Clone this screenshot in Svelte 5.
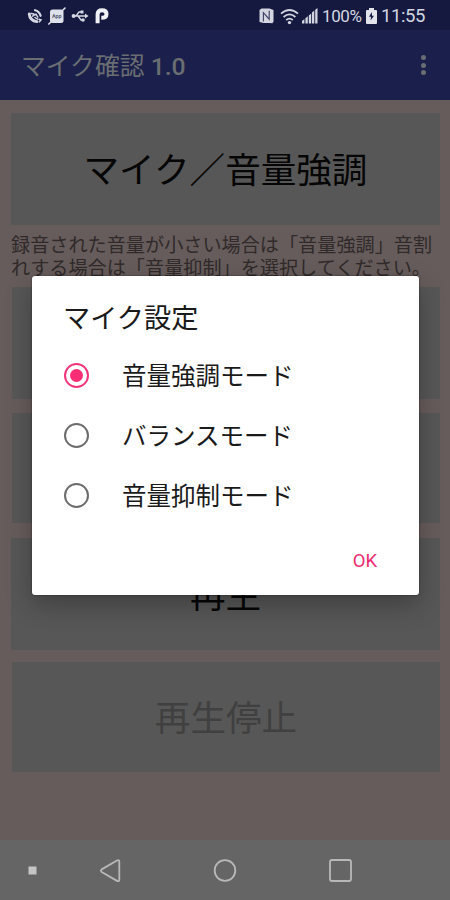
<script lang="ts">
  let selected = $state(0);
  let open = $state(true);

  const modes = ['音量強調モード', 'バランスモード', '音量抑制モード'];
</script>

<div class="screen">
  <header class="statusbar">
    <div class="group left">
      <svg class="call" width="16" height="17" viewBox="0 0 16 17">
        <path d="M2.2 6C2.6 10 5.5 13 10 13.6" fill="none" stroke="#d5d7e3" stroke-width="2.8" stroke-linecap="round" />
        <path d="M8 2.2q4.4 1 5.6 5.6" fill="none" stroke="#d5d7e3" stroke-width="2.2" stroke-linecap="round" />
        <path d="M4 5.5l3 .5M5.5 8.2l3.5-2 1.8 3M8 9.5l2.5 1.7M12 11.2l2 .6-1.6 2" fill="none" stroke="#d5d7e3" stroke-width="1.5" stroke-linecap="round" />
      </svg>
      <svg class="app" width="18" height="18" viewBox="0 0 18 18">
        <rect x="2" y="2.5" width="13.5" height="13.5" rx="2.5" fill="#dfe1ea" />
        <path d="M14.5 3.5L17 1M3 15l-2.2 2" stroke="#dfe1ea" stroke-width="1.6" stroke-linecap="round" />
        <text x="8.8" y="11" text-anchor="middle" font-size="5.5" font-weight="700" fill="#5b5e78">App</text>
      </svg>
      <svg class="usb" width="18" height="14" viewBox="0 0 18 14">
        <path d="M2 7h13M5 7l3-4h2.5M7 7l3 4h2.5" fill="none" stroke="#d5d7e3" stroke-width="1.4" />
        <circle cx="2.6" cy="7" r="2" fill="#d5d7e3" />
        <path d="M14 4.4L17.5 7 14 9.6zM9.5 1.5h3v3h-3z" fill="#d5d7e3" />
        <circle cx="12" cy="11" r="1.8" fill="#d5d7e3" />
      </svg>
      <svg class="parking" width="14" height="16" viewBox="0 0 14 16">
        <path d="M2.6 15.2V6.2Q2.8 2.2 7 2.2c3 0 4.5 1.4 4.5 3.7S10 9.8 6.3 9.8" fill="none" stroke="#f0f1f5" stroke-width="4" />
      </svg>
    </div>
    <div class="group right">
      <svg class="nfc" width="15" height="16" viewBox="0 0 15 16">
        <path d="M2.5 0.5h8L14.5 2v12l-2 1.5h-2L14.5 15H4.5L.5 14V2z" fill="#d3d5e0" />
        <path d="M4.4 13.4V4.6l5.8 6.6V2.8" fill="none" stroke="#3a3e62" stroke-width="1.1" />
      </svg>
      <svg class="wifi" width="19" height="17" viewBox="0 0 19 17">
        <path d="M1 5.6Q9.5-1.6 18 5.6M3.6 9Q9.5 3.8 15.4 9M6.2 12Q9.5 9.2 12.8 12" fill="none" stroke="#d3d5e0" stroke-width="1.7" />
        <circle cx="9.5" cy="14.6" r="1.7" fill="#d3d5e0" />
      </svg>
      <svg class="signal" width="16" height="16" viewBox="0 0 16 16">
        <path d="M0 15.5V13l2.4-2v4.5zM3.4 15.5v-5.3l2.4-2v7.3zM6.8 15.5V7.4l2.4-2v10.1zM10 15.5V4.5l2.3-2v13zM13.2 15.5V1.7L15.5 0v15.5z" fill="#d3d5e0" />
      </svg>
      <span class="percent">100%</span>
      <svg class="battery" width="11" height="16" viewBox="0 0 11 16">
        <path d="M3 0h5v2h2a1 1 0 0 1 1 1v12a1 1 0 0 1-1 1H1a1 1 0 0 1-1-1V3a1 1 0 0 1 1-1h2z" fill="#e3e4eb" />
        <path d="M5.8 4L3 8.8h2L4.6 12.5 8 7.8H6z" fill="#181c45" />
      </svg>
      <time>11:55</time>
    </div>
  </header>

  <div class="appbar">
    <h1>マイク確認 <b>1.0</b></h1>
    <button class="more" aria-label="メニュー"><i></i><i></i><i></i></button>
  </div>

  <main>
    <button class="tile first" onclick={() => (open = true)}>マイク／音量強調</button>
    <p>録音された音量が小さい場合は「音量強調」音割<br />れする場合は「音量抑制」を選択してください。</p>
    <div class="tile"></div>
    <div class="tile short"></div>
    <button class="tile">再生</button>
    <button class="tile short" disabled>再生停止</button>
  </main>

  <nav>
    <svg width="450" height="60" viewBox="0 0 450 60">
      <rect x="28.5" y="26.5" width="8" height="8" fill="#c5c5c5" />
      <g fill="none" stroke="#b8b8b8" stroke-width="1.8" stroke-linejoin="round">
        <path d="M101.7 29.4L117 20.5q2.3-1 2.3 1.2v18q0 2.2-2.3 1.2L101.7 32q-1.6-1.3 0-2.6z" />
        <circle cx="225" cy="30.5" r="10.3" />
        <rect x="330" y="20" width="21" height="21" rx="2" />
      </g>
    </svg>
  </nav>

  {#if open}
    <div class="dialog" role="dialog" aria-label="マイク設定">
      <h2>マイク設定</h2>
      <div class="options">
        {#each modes as mode, i}
          <button class="option" onclick={() => (selected = i)}>
            <span class="radio" class:checked={selected === i}></span>
            <span class="label">{mode}</span>
          </button>
        {/each}
      </div>
      <button class="ok" onclick={() => (open = false)}>OK</button>
    </div>
  {/if}
</div>

<style>
  .screen {
    position: relative;
    display: flex;
    flex-direction: column;
    width: 450px;
    height: 900px;
    overflow: hidden;
    background: #665c5b;
    font-family: Roboto, 'Noto Sans CJK JP', sans-serif;
  }
  button {
    border: 0;
    padding: 0;
    background: none;
    font-family: inherit;
  }
  h1, h2, p {
    margin: 0;
    font-weight: 400;
    white-space: nowrap;
  }
  svg {
    display: block;
    flex: none;
  }
  .statusbar {
    display: flex;
    justify-content: space-between;
    height: 30px;
    padding: 0 25px 0 27px;
    background: #15193f;
    color: #d3d5e0;
    box-sizing: border-box;
  }
  .group {
    display: flex;
    align-items: center;
    height: 32px;
  }
  .app {
    margin-left: 5px;
  }
  .usb {
    margin-left: 5px;
  }
  .parking {
    margin-left: 6px;
  }
  .wifi {
    margin-left: 6px;
  }
  .signal {
    margin-left: 3px;
  }
  .percent {
    margin-left: 4px;
    width: 40px;
    font-size: 17px;
    letter-spacing: -0.4px;
  }
  .battery {
    margin-left: 4px;
  }
  time {
    margin-left: 4px;
    width: 44px;
    font-size: 18.5px;
    letter-spacing: -0.4px;
    white-space: nowrap;
  }
  .appbar {
    display: flex;
    justify-content: space-between;
    align-items: center;
    height: 70px;
    padding: 0 22px;
    background: #1a204b;
    color: #6a6d72;
    box-sizing: border-box;
  }
  h1 {
    padding-top: 4px;
    margin-left: -1px;
    font-size: 24.8px;
    line-height: 36px;
  }
  h1 b {
    font-weight: 500;
  }
  .more {
    display: flex;
    flex-direction: column;
    align-items: center;
    gap: 2.5px;
    width: 10px;
  }
  .more i {
    width: 5px;
    height: 5px;
    border-radius: 50%;
    background: #6a6d72;
  }
  main {
    flex: 1;
    display: flex;
    flex-direction: column;
    padding: 13px 10px 0 11px;
  }
  .tile {
    flex: none;
    height: 112px;
    margin-bottom: 12px;
    padding-bottom: 4px;
    background: #575757;
    color: #060606;
    font-size: 35.6px;
    box-sizing: border-box;
  }
  .tile.first {
    margin-bottom: 8px;
  }
  .tile.short {
    height: 110px;
    margin-left: 1px;
    margin-bottom: 15px;
  }
  .tile:disabled {
    color: #404040;
  }
  p + .tile {
    margin-bottom: 14px;
    margin-left: 1px;
  }
  p {
    height: 54px;
    padding-top: 1px;
    color: #302a2a;
    font-size: 19.15px;
    line-height: 23px;
    box-sizing: border-box;
  }
  nav {
    height: 60px;
    background: #656565;
  }
  .dialog {
    position: absolute;
    left: 32px;
    top: 276px;
    display: flex;
    flex-direction: column;
    width: 387px;
    height: 319px;
    padding: 23px 31px 0 32px;
    border-radius: 3px;
    background: #fff;
    box-shadow: 0 0 2px rgba(0, 0, 0, 0.5), 0 10px 26px rgba(0, 0, 0, 0.28);
    box-sizing: border-box;
  }
  h2 {
    margin-left: -1px;
    color: #1a1a1a;
    font-size: 27.2px;
    line-height: 40px;
  }
  .options {
    padding-top: 6px;
  }
  .option {
    display: flex;
    align-items: center;
    width: 100%;
    height: 60px;
  }
  .radio {
    display: grid;
    place-items: center;
    width: 25px;
    height: 25px;
    border: 2px solid #6c6c6c;
    border-radius: 50%;
    box-sizing: border-box;
  }
  .radio.checked {
    border-color: #f0347a;
  }
  .radio.checked::after {
    content: '';
    width: 13px;
    height: 13px;
    border-radius: 50%;
    background: #f82d75;
  }
  .label {
    margin-left: 33px;
    padding-top: 3px;
    color: #1a1a1a;
    font-size: 24.5px;
    line-height: 36px;
    white-space: nowrap;
  }
  .ok {
    align-self: flex-end;
    margin: 24px 11px 0 0;
    color: #ec2c72;
    font-size: 18.5px;
    line-height: 24px;
  }
</style>
